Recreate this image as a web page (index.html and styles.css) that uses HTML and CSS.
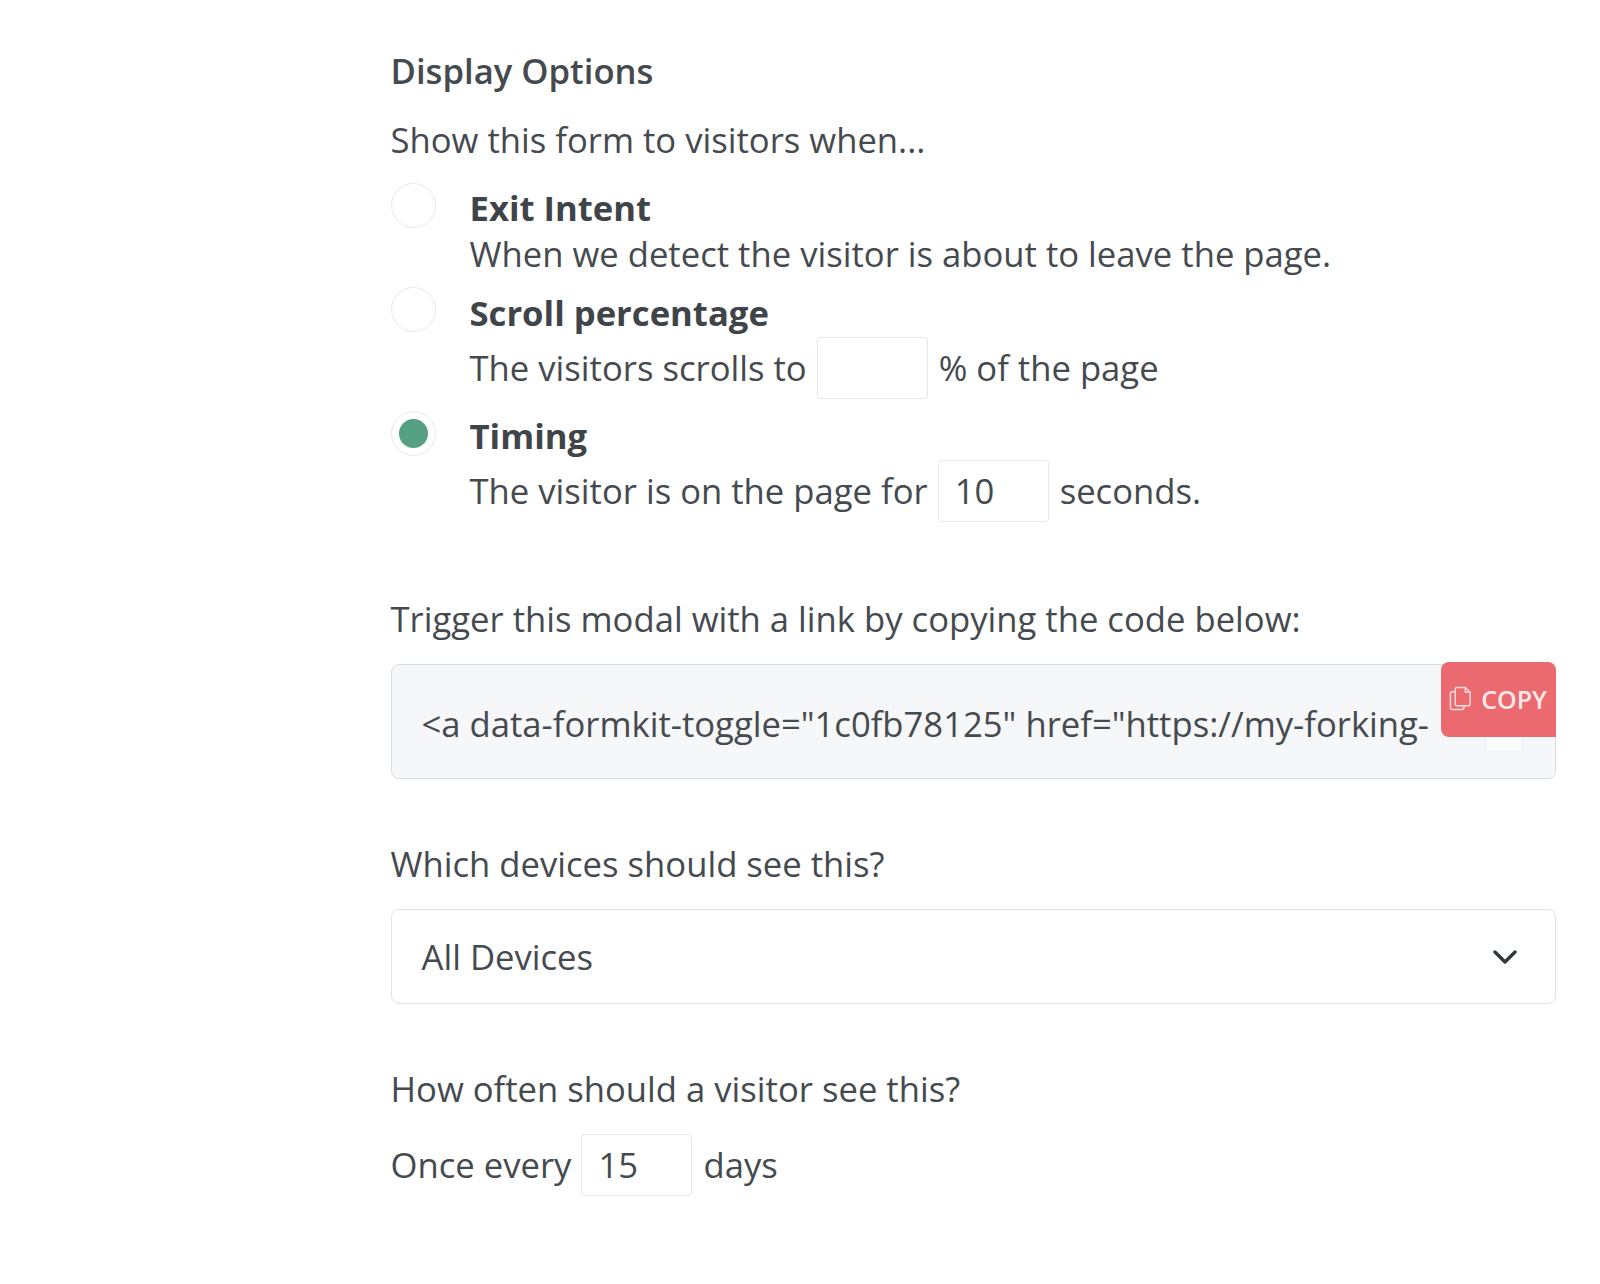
FILE: index.html
```html
<!DOCTYPE html>
<html lang="en">
<head>
<meta charset="utf-8">
<title>Display Options</title>
<link rel="stylesheet" href="styles.css">
</head>
<body>
<main class="panel">
  <h2 class="heading">Display Options</h2>
  <p class="label intro">Show this form to visitors when...</p>

  <div class="option option-exit">
    <span class="radio"></span>
    <div class="option-body">
      <div class="option-title">Exit Intent</div>
      <div class="option-line">When we detect the visitor is about to leave the page.</div>
    </div>
  </div>

  <div class="option option-scroll">
    <span class="radio"></span>
    <div class="option-body">
      <div class="option-title">Scroll percentage</div>
      <div class="option-line inline">The visitors scrolls to <span class="field"></span> % of the page</div>
    </div>
  </div>

  <div class="option option-timing">
    <span class="radio checked"></span>
    <div class="option-body">
      <div class="option-title">Timing</div>
      <div class="option-line inline">The visitor is on the page for <span class="field">10</span> seconds.</div>
    </div>
  </div>

  <p class="label trigger">Trigger this modal with a link by copying the code below:</p>
  <div class="code">
    <span class="code-text">&lt;a data-formkit-toggle="1c0fb78125" href="https://my-forking-</span>
    <span class="code-ghost"></span>
    <button class="copy">
      <svg class="copy-icon" viewBox="0 0 24 26" width="23" height="25" fill="none" stroke="#fbdcdc" stroke-width="1.5" stroke-linejoin="round" stroke-linecap="round">
        <path d="M8 1.5h9l5 5V19a1.5 1.5 0 0 1-1.500 1.500H8A1.500 1.500 0 0 1 6.500 19V3A1.500 1.500 0 0 1 8 1.500z"/>
        <path d="M17 1.500V6.500h5"/>
        <path d="M6.500 6H3A1.500 1.500 0 0 0 1.500 7.500V23A1.500 1.500 0 0 0 3 24.500h11A1.500 1.500 0 0 0 15.500 23V20.500"/>
      </svg>
      <span>COPY</span>
    </button>
  </div>

  <p class="label devices">Which devices should see this?</p>
  <div class="select">
    <span>All Devices</span>
    <svg class="chevron" viewBox="0 0 24 14" width="24" height="14" fill="none" stroke="#33383d" stroke-width="3.400" stroke-linecap="round" stroke-linejoin="round"><path d="M2 2l10 10L22 2"/></svg>
  </div>

  <p class="label often">How often should a visitor see this?</p>
  <div class="option-line inline once">Once every <span class="field">15</span> days</div>
</main>
</body>
</html>
```
FILE: styles.css
```css
* { box-sizing: border-box; }
html, body { margin: 0; padding: 0; background: #fff; }
body {
  font-family: "Open Sans", "Noto Sans", sans-serif;
  font-size: 34.65px;
  color: #454a4f;
  height: 1284px;
  overflow: hidden;
}
.panel { width: 1165.5px; margin-left: 390.5px; padding-top: 48px; }
.heading { margin: 0; font-size: 34.65px; line-height: 46px; font-weight: 600; color: #454a4f; }
.label { margin: 0; line-height: 46px; }
.intro { margin-top: 23px; }
.option { display: flex; align-items: flex-start; }
.option-exit { margin-top: 20px; }
.option-scroll { margin-top: 10px; }
.option-timing { margin-top: 12px; }
.radio {
  flex: none; width: 45px; height: 45px; border-radius: 50%;
  border: 1.500px solid #e6e8ea; background: #fff; position: relative;
}
.radio.checked::after {
  content: ""; position: absolute; left: 7px; top: 6.500px; width: 29px; height: 29px;
  border-radius: 50%; background: #55a083;
}
.option-body { margin-left: 34px; }
.option-title { font-weight: 700; line-height: 46px; margin-top: 2px; color: #3f4449; }
.option-scroll .option-title { margin-top: 3px; }
.option-line { line-height: 46px; }
.inline { display: flex; align-items: center; white-space: pre; }
.option-scroll .option-line, .option-timing .option-line { margin-top: 1px; height: 62px; }
.field {
  display: inline-block; width: 111px; height: 62px; line-height: 60px; margin: 0 2px 0 1px;
  padding-left: 16px; border: 1.500px solid #e6e8ea; border-radius: 3px; background: #fff; color: #454a4f;
}
.trigger { margin-top: 74px; }
.code {
  position: relative; margin-top: 22px; height: 115px; display: flex; align-items: center;
  padding: 4px 30px 0; background: #f6f7f9; border: 1.500px solid #d9dcdf; border-radius: 8px; white-space: nowrap;
}
.code-ghost {
  position: absolute; right: 32px; top: 72px; width: 38px; height: 13px;
  background: #fbfcfc; border-left: 1px solid #e6e8ea; border-right: 1px solid #e6e8ea;
}
.copy {
  position: absolute; top: -3px; right: -0.500px; width: 115px; height: 75px;
  display: flex; align-items: center; justify-content: center; gap: 9px; padding: 0 0 2px 0;
  background: #eb6a70; color: #fde8e8; border: 0; border-radius: 8px 8px 0 8px;
  font: 600 25px "Open Sans", sans-serif;
}
.copy-icon { flex: none; }
.devices { margin-top: 62px; }
.select {
  margin-top: 22px; height: 95px; display: flex; align-items: center; justify-content: space-between;
  padding: 0 38px 0 30px; background: #fff; border: 1.500px solid #e1e3e5; border-radius: 8px; color: #454a4f;
}
.chevron { flex: none; }
.often { margin-top: 62px; }
.once { margin-top: 22px; height: 62px; }
```
